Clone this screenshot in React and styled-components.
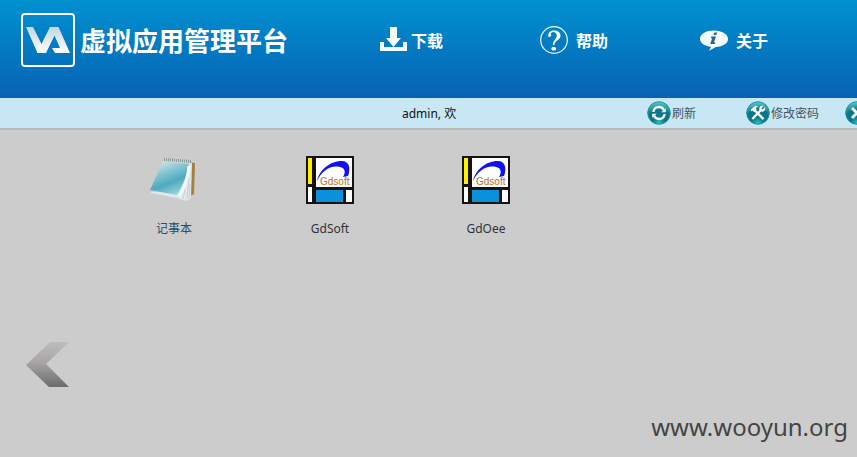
import React from "react";
import styled, { createGlobalStyle } from "styled-components";

const Global = createGlobalStyle`
  *, *::before, *::after { box-sizing: border-box; }
  body {
    margin: 0;
    background: #cccccc;
    overflow: hidden;
    font-family: "Noto Sans", "Noto Sans CJK SC", sans-serif;
    font-size: 12px;
    color: #222222;
  }
`;

const Page = styled.div`
  min-height: 100vh;
  display: flex;
  flex-direction: column;
`;

const Header = styled.header`
  display: flex;
  align-items: flex-start;
  padding: 13px 0 31px 21px;
  background: linear-gradient(#0091d0, #0862b3);
`;

const Brand = styled.h1`
  display: flex;
  align-items: center;
  gap: 5px;
  flex: 0 0 359px;
  margin: 0;
  color: #ffffff;
  font: bold 26px/54px "Noto Sans CJK SC", sans-serif;
  white-space: nowrap;
`;

const Nav = styled.nav`
  display: grid;
  grid-template-columns: repeat(3, 160px);
`;

const NavLink = styled.a`
  display: flex;
  align-items: center;
  gap: ${(p) => p.$gap}px;
  height: 54px;
  color: #ffffff;
  font: bold 16px/24px "Noto Sans CJK SC", sans-serif;
  text-decoration: none;
`;

const Toolbar = styled.div`
  display: flex;
  align-items: center;
  height: 32px;
  padding-left: 402px;
  background: #c7e7f4;
  border-bottom: 2px solid #b9b9b9;
  overflow: hidden;
`;

const Welcome = styled.span`
  flex: 0 0 245px;
  color: #111111;
  white-space: nowrap;
`;

const Tool = styled.button`
  display: flex;
  align-items: center;
  gap: 1px;
  flex: 0 0 99px;
  padding: 0;
  border: 0;
  background: none;
  color: #3f5666;
  font: inherit;
  white-space: nowrap;
  cursor: pointer;
`;

const Desktop = styled.main`
  flex: 1;
  display: flex;
  flex-direction: column;
  padding: 26px 9px 13px 26px;
`;

const AppGrid = styled.div`
  display: grid;
  grid-template-columns: repeat(auto-fill, 156px);
  padding-left: 70px;
`;

const AppLink = styled.a`
  display: flex;
  flex-direction: column;
  align-items: center;
  gap: 16px;
  color: ${(p) => (p.$active ? "#2a4c6a" : "#333333")};
  line-height: 18px;
  text-decoration: none;
`;

const Previous = styled.button`
  display: flex;
  align-self: flex-start;
  margin-top: 104px;
  padding: 0;
  border: 0;
  background: none;
  cursor: pointer;
`;

const Watermark = styled.p`
  align-self: flex-end;
  margin: auto 0 0;
  color: #444444;
  font-size: 24px;
  line-height: 34px;
`;

const Logo = () => (
  <svg width="54" height="54" viewBox="0 0 54 54" aria-hidden="true">
    <defs>
      <linearGradient id="va" x1="0" y1="0" x2="0" y2="1">
        <stop offset="0" stopColor="#c3d6dc" />
        <stop offset="1" stopColor="#ffffff" />
      </linearGradient>
    </defs>
    <rect x="1" y="1" width="52" height="52" rx="3" fill="none" stroke="#fff" strokeWidth="2" />
    <path
      d="M5 14H12L20.5 31L29 14H37.5L49 40H34L31 35H39L33.5 22.5L25 40H16.5Z"
      fill="url(#va)"
    />
  </svg>
);

const DownloadIcon = () => (
  <svg width="28" height="26" viewBox="0 0 28 26" aria-hidden="true">
    <path d="M10 0H17V11H21L13.5 20L6 11H10ZM0 15H4V20H23V15H27V24H0Z" fill="#f4fbff" />
  </svg>
);

const HelpIcon = () => (
  <svg width="28" height="28" viewBox="0 0 28 28" aria-hidden="true">
    <circle cx="14" cy="14" r="13.3" fill="none" stroke="#f0faff" strokeWidth="1.2" />
    <path
      d="M8.5 11C7.5 7 10 4.5 14 4.5C18 4.5 20.5 6.5 20.5 9.7C20.5 14 15 14 14.3 19H12.8C12.8 14 16.7 13.5 16.7 9.7C16.7 7.3 15.5 6 13.4 6C11.5 6 10.5 7 11 8.2C11.6 9.8 11 11 8.5 11Z"
      fill="#fff"
    />
    <ellipse cx="13.7" cy="22.7" rx="2.4" ry="1.9" fill="#fff" />
  </svg>
);

const AboutIcon = () => (
  <svg width="29" height="22" viewBox="0 0 29 22" aria-hidden="true">
    <path
      d="M14 1.5C22 1.5 28 5.1 28 9.9C28 14.5 22.5 17.5 16 18L9 21.8L11 17.7C4.5 17 0 14.1 0 9.7C0 5 6 1.5 14 1.5Z"
      fill="#f5fbff"
    />
    <path d="M14.4 3.5H17.2L16.3 6.1H13.5ZM11.4 7.5H16L13.9 13.5H15.5L14.9 15H10.2L12.2 9.2H10.8Z" fill="#2d6584" />
  </svg>
);

const Orb = ({ id, children }) => (
  <svg width="24" height="24" viewBox="0 0 24 24" aria-hidden="true">
    <defs>
      <radialGradient id={id} cx="0.5" cy="0.95" r="0.95">
        <stop offset="0" stopColor="#26c5c2" />
        <stop offset="0.3" stopColor="#08768b" />
        <stop offset="0.62" stopColor="#087689" />
        <stop offset="1" stopColor="#55d3cf" />
      </radialGradient>
    </defs>
    <circle cx="12" cy="12" r="11.3" fill={`url(#${id})`} stroke="#2b8a9c" strokeWidth="1" />
    <g fill="none" stroke="#fff" strokeWidth="2.4">{children}</g>
  </svg>
);

const RefreshIcon = () => (
  <Orb id="orbRefresh">
    <path d="M6.4 11C6.8 5.3 14 4.5 16.8 8.8M17.6 13C17.2 18.7 10 19.5 7.2 15.2" />
    <path d="M18.8 7.2V11.2H14.2ZM5.2 16.8V12.8H9.8Z" fill="#fff" stroke="none" />
  </Orb>
);

const ToolsIcon = () => (
  <Orb id="orbTools">
    <path d="M8 8.5L17.5 18.2M6.3 18L15 9" />
    <path d="M4.5 9L9 4.7L12 5.3L9.8 7L10.5 8.8L8 11.2L6.7 9.6L5.7 10.5Z" fill="#fff" stroke="none" />
    <path d="M18.9 6.3L16.6 8.5L15.3 7.2L17.4 5C14.8 4.1 12.5 6.5 13.6 9.1L15 10.5C17.7 11.3 20 9 18.9 6.3Z" fill="#fff" stroke="none" />
  </Orb>
);

const CloseIcon = () => (
  <Orb id="orbClose">
    <path d="M7 7L17 17M17 7L7 17" strokeWidth="3" />
  </Orb>
);

const NotepadIcon = () => (
  <svg width="48" height="48" viewBox="0 0 48 48" aria-hidden="true">
    <defs>
      <linearGradient id="cover" x1="0.2" y1="0" x2="0.65" y2="1">
        <stop offset="0" stopColor="#d2edf2" />
        <stop offset="0.35" stopColor="#86c6d3" />
        <stop offset="0.65" stopColor="#4fa9be" />
        <stop offset="1" stopColor="#9bd5df" />
      </linearGradient>
    </defs>
    <path d="M38 6L45 7L44 38L37 42Z" fill="#a5803c" />
    <path d="M1 36L26 35L38 6L42 7L41 42L36 45L27 42L1 37Z" fill="#dfe8ec" />
    <path d="M13 5L39 7C37 18 33 30 27 39L0 34Z" fill="url(#cover)" />
    <path d="M39 10C38 22 35 32 29 40" fill="none" stroke="#f3f8f9" strokeWidth="3" />
    <path d="M39 22L37 43M40 28L39 42M35 33L33 43" stroke="#b9c8ce" strokeWidth="0.7" />
    <path d="M14 5L41 7" stroke="#ccd6d8" strokeWidth="2" />
    <path d="M14 3.5L41 5.5" stroke="#8d989a" strokeWidth="3" strokeDasharray="1 1" />
  </svg>
);

const GdsoftIcon = () => (
  <svg width="48" height="48" viewBox="0 0 48 48" aria-hidden="true">
    <rect width="48" height="48" fill="#17120f" />
    <rect x="2" y="2" width="4" height="26" fill="#fff000" />
    <rect x="2" y="31" width="4" height="15" fill="#fff" />
    <rect x="10" y="2" width="36" height="29" fill="#fff" />
    <rect x="10" y="34" width="27" height="12" fill="#0b91dc" />
    <rect x="40" y="34" width="6" height="12" fill="#fff" />
    <path d="M11 25C13 15 23 5 36 5C43 5 45 12 42 20L37 21C40 16 39 12 34 11C24 9 16 15 11 25Z" fill="#1010f0" />
    <text x="14" y="29" fontFamily="Liberation Sans, sans-serif" fontSize="10" fill="#bd6e2c">Gdsoft</text>
  </svg>
);

const ArrowIcon = () => (
  <svg width="44" height="46" viewBox="0 0 44 46" aria-hidden="true">
    <defs>
      <linearGradient id="arrow" x1="0" y1="0" x2="0" y2="1">
        <stop offset="0" stopColor="#bfbcbd" />
        <stop offset="0.45" stopColor="#a7a5a6" />
        <stop offset="1" stopColor="#6c6b6c" />
      </linearGradient>
    </defs>
    <path d="M24 0H43L20 22L43 45H23L0 23Z" fill="url(#arrow)" />
  </svg>
);

const navItems = [
  { label: "下载", Icon: DownloadIcon, gap: 3 },
  { label: "帮助", Icon: HelpIcon, gap: 8 },
  { label: "关于", Icon: AboutIcon, gap: 7 },
];

const apps = [
  { label: "记事本", Icon: NotepadIcon, active: true },
  { label: "GdSoft", Icon: GdsoftIcon },
  { label: "GdOee", Icon: GdsoftIcon },
];

export default function App() {
  return (
    <Page>
      <Global />
      <Header>
        <Brand><Logo />虚拟应用管理平台</Brand>
        <Nav>
          {navItems.map(({ label, Icon, gap }) => (
            <NavLink key={label} href="#" $gap={gap}><Icon />{label}</NavLink>
          ))}
        </Nav>
      </Header>
      <Toolbar>
        <Welcome>admin, 欢</Welcome>
        <Tool type="button"><RefreshIcon />刷新</Tool>
        <Tool type="button"><ToolsIcon />修改密码</Tool>
        <Tool type="button" aria-label="关闭"><CloseIcon /></Tool>
      </Toolbar>
      <Desktop>
        <AppGrid>
          {apps.map(({ label, Icon, active }) => (
            <AppLink key={label} href="#" $active={active}><Icon />{label}</AppLink>
          ))}
        </AppGrid>
        <Previous type="button" aria-label="上一页"><ArrowIcon /></Previous>
        <Watermark>www.wooyun.org</Watermark>
      </Desktop>
    </Page>
  );
}
